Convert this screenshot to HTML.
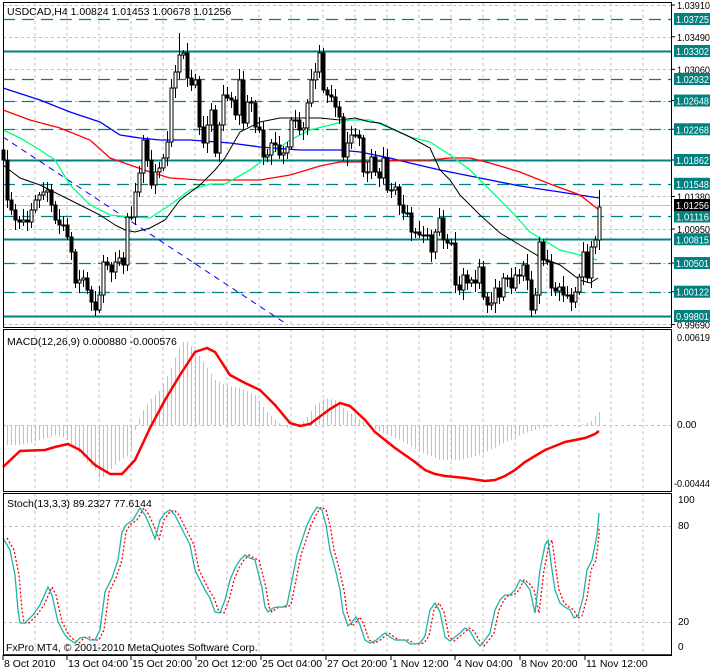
<!DOCTYPE html>
<html><head><meta charset="utf-8">
<style>
html,body{margin:0;padding:0;background:#fff;width:710px;height:671px;overflow:hidden}
svg{display:block}
text{font-family:"Liberation Sans",sans-serif;font-size:10.5px;fill:#000}
text.ax{font-size:10px}
</style></head><body>
<svg id="s" width="710" height="671" xmlns="http://www.w3.org/2000/svg"></svg>
<script>
var S=document.getElementById('s'),h='';
function Y(p){return 51+(1.03302-p)/0.0001321;}
function interp(pts,x){for(var i=0;i<pts.length-1;i++){if(x>=pts[i][0]&&x<=pts[i+1][0]){var t=(x-pts[i][0])/(pts[i+1][0]-pts[i][0]);return pts[i][1]+t*(pts[i+1][1]-pts[i][1]);}}return x<pts[0][0]?pts[0][1]:pts[pts.length-1][1];}
function pl(pts,c,w,d){return '<polyline fill="none" stroke="'+c+'" stroke-width="'+w+'"'+(d?' stroke-dasharray="'+d+'"':'')+' points="'+pts.map(function(p){return p[0]+','+p[1]}).join(' ')+'"/>';}
function at(x,y,s,st){return '<text class="ax" x="'+x+'" y="'+y+'" textLength="33" lengthAdjust="spacingAndGlyphs"'+(st?' style="'+st+'"':'')+'>'+s+'</text>';}
for(var x=35;x<672;x+=32){h+='<line x1="'+x+'" y1="3" x2="'+x+'" y2="327" stroke="#c0c0c0" stroke-dasharray="3,3"/>';h+='<line x1="'+x+'" y1="329" x2="'+x+'" y2="491" stroke="#c0c0c0" stroke-dasharray="3,3"/>';h+='<line x1="'+x+'" y1="493" x2="'+x+'" y2="655" stroke="#c0c0c0" stroke-dasharray="3,3"/>';}
var gridP=[1.03910,1.03490,1.03060,1.02648,1.02268,1.01862,1.01380,1.00950,1.00501,1.00122,0.99690];
gridP.forEach(function(p){var y=Math.round(Y(p))+.5;h+='<line x1="3" y1="'+y+'" x2="672" y2="'+y+'" stroke="#c0c0c0" stroke-dasharray="3,3"/>';});
var lv=[[1.03725,0],[1.03302,1],[1.02932,0],[1.02648,0],[1.02268,0],[1.01862,1],[1.01548,0],[1.01116,0],[1.00815,1],[1.00501,0],[1.00122,0],[0.99801,1]];
lv.forEach(function(l){var y=Math.round(Y(l[0]))+.5;h+='<line x1="3" y1="'+y+'" x2="672" y2="'+y+'" stroke="#008080" stroke-width="'+(l[1]?2:1.3)+'"'+(l[1]?'':' stroke-dasharray="12,7"')+'/>';});
h+='<line x1="3" y1="205.5" x2="672" y2="205.5" stroke="#c0c0c0"/>';
h+='<line x1="3" y1="137" x2="285" y2="323" stroke="#0000ff" stroke-dasharray="6,5"/>';
var blue=[[3,88],[40,100],[70,112],[100,122],[120,135],[140,138],[160,140],[190,140],[230,143],[260,147],[300,150],[340,150],[360,152],[390,158],[410,163],[440,170],[480,178],[520,186],[560,192],[599,198]];
var red=[[3,110],[30,120],[60,128],[90,140],[110,158],[130,165],[150,172],[170,178],[200,180],[230,180],[260,180],[290,175],[320,166],[340,162],[370,162],[400,160],[430,160],[450,158],[470,158],[490,163],[520,172],[550,184],[580,195],[599,210]];
var green=[[3,130],[20,138],[40,150],[55,160],[70,185],[90,205],[110,215],[130,217],[150,218],[170,205],[190,190],[210,184],[225,184],[250,170],[270,155],[290,140],[310,130],[330,125],[350,120],[370,120],[390,128],[410,137],[430,142],[450,155],[470,170],[490,190],[510,210],[530,232],[560,250],[580,255],[597,260]];
var blk=[[3,165],[20,178],[40,185],[60,195],[80,205],[100,215],[115,225],[125,230],[135,232],[150,228],[165,220],[180,200],[200,185],[215,170],[225,158],[240,132],[260,122],[280,118],[300,118],[320,118],[340,120],[355,118],[370,122],[380,123],[395,130],[410,137],[430,148],[440,170],[450,180],[460,195],[480,215],[500,233],[520,245],[540,257],[560,265],[580,280],[590,283],[598,278]];
h+=pl(blue,'#0000ff',1.3)+pl(red,'#ff0000',1.3)+pl(green,'#00ff7f',1.3)+pl(blk,'#000',1);
var cp=[[3,160],[7,200],[11,210],[15,220],[19,222],[23,220],[27,222],[31,210],[35,200],[39,195],[43,192],[47,190],[51,205],[55,220],[59,225],[63,225],[67,237],[71,252],[75,283],[79,280],[83,278],[87,290],[91,302],[95,310],[99,295],[103,262],[107,265],[111,272],[115,262],[119,258],[123,265],[127,217],[131,217],[135,192],[139,173],[143,140],[147,160],[151,185],[155,172],[159,168],[163,158],[167,142],[171,88],[175,72],[179,55],[183,53],[187,78],[191,85],[195,80],[199,127],[203,143],[207,125],[211,110],[215,153],[219,125],[223,95],[227,98],[231,100],[235,115],[239,80],[243,123],[247,102],[251,103],[255,127],[259,130],[263,157],[267,155],[271,143],[275,145],[279,155],[283,153],[287,147],[291,120],[295,120],[299,130],[303,128],[307,103],[311,80],[315,72],[319,53],[323,90],[327,95],[331,97],[335,107],[339,117],[343,157],[347,143],[351,135],[355,135],[359,138],[363,172],[367,172],[371,157],[375,172],[379,178],[383,158],[387,190],[391,190],[395,187],[399,205],[403,213],[407,213],[411,232],[415,232],[419,235],[423,235],[427,235],[431,252],[435,232],[439,218],[443,240],[447,243],[451,243],[455,285],[459,290],[463,275],[467,283],[471,280],[475,283],[479,267],[483,297],[487,305],[491,303],[495,288],[499,297],[503,278],[507,278],[511,288],[515,275],[519,276],[523,265],[527,280],[531,310],[535,295],[539,242],[543,260],[547,262],[551,288],[555,291],[559,287],[563,295],[567,295],[571,302],[575,292],[579,277],[583,252],[587,278],[591,247],[595,240],[599,207]];
var prev=150;
for(var i=0;i<cp.length;i++){var x=cp[i][0],c=cp[i][1],o=(i==cp.length-1)?240:prev;var t=Math.min(o,c),b=Math.max(o,c);var hi=t-3-((i*7)%9),lo=b+3+((i*5)%8);if(i==cp.length-1){hi=190;lo=250;}if(x==179)hi=33;if(x==319)hi=45;
h+='<line x1="'+(x+.5)+'" y1="'+hi+'" x2="'+(x+.5)+'" y2="'+lo+'" stroke="#000"/>';
if(b-t<1)b=t+1;
h+='<rect x="'+(x-1)+'" y="'+t+'" width="3" height="'+(b-t)+'" fill="'+(c<o?'#fff':'#000')+'" stroke="#000" stroke-width="1"/>';prev=c;}
var hist=[[3,445],[20,445],[40,440],[55,435],[65,438],[75,448],[85,460],[95,470],[100,480],[110,470],[120,460],[130,455],[135,430],[140,415],[150,400],[160,390],[170,370],[180,345],[185,340],[195,350],[205,365],[215,380],[225,385],[240,388],[255,395],[265,410],[275,420],[285,428],[295,426],[305,420],[315,405],[325,398],[335,400],[345,410],[360,420],[380,432],[400,440],[420,452],[440,460],[460,460],[480,455],[500,445],[520,435],[540,428],[560,425],[580,425],[590,422],[599,412]];
h+='<line x1="3" y1="425.5" x2="672" y2="425.5" stroke="#c0c0c0" stroke-dasharray="3,3"/>';
for(var x=3;x<=599;x+=4){var v=interp(hist,x);h+='<line x1="'+(x+.5)+'" y1="425" x2="'+(x+.5)+'" y2="'+v+'" stroke="#c0c0c0"/>';}
var macd=[[3,467],[20,451],[45,450],[55,447],[68,444],[80,450],[95,465],[110,474],[122,474],[135,460],[150,428],[165,400],[180,375],[195,352],[207,348],[215,352],[230,375],[245,383],[260,390],[275,405],[290,423],[300,426],[310,424],[330,409],[340,403],[350,406],[365,420],[375,432],[385,440],[395,448],[405,455],[415,462],[425,470],[435,474],[445,476],[465,478],[485,481],[495,480],[505,476],[515,470],[525,462],[535,456],[545,450],[555,446],[565,442],[575,440],[585,438],[595,434],[599,431]];
h+=pl(macd,'#ff0000',2.5);
h+='<line x1="3" y1="526.5" x2="672" y2="526.5" stroke="#c0c0c0" stroke-dasharray="3,3"/><line x1="3" y1="622.5" x2="672" y2="622.5" stroke="#c0c0c0" stroke-dasharray="3,3"/>';
var st=[[3,538],[10,550],[15,575],[18,610],[20,623],[25,623],[33,615],[40,605],[48,587],[52,595],[58,622],[65,635],[70,640],[75,643],[80,638],[85,637],[90,640],[95,640],[100,630],[105,592],[112,578],[118,560],[122,532],[126,525],[133,520],[140,508],[145,515],[150,526],[155,539],[160,520],[165,513],[170,510],[175,515],[180,525],[190,545],[195,570],[200,580],[205,590],[210,598],[215,612],[220,613],[225,600],[230,580],[235,568],[240,560],[245,555],[250,558],[255,560],[258,572],[262,588],[265,607],[268,612],[273,608],[278,607],[283,607],[287,605],[292,580],[297,555],[302,540],[307,525],[312,515],[317,507],[322,510],[326,525],[330,550],[335,568],[340,590],[343,612],[348,626],[352,622],[356,617],[360,625],[365,640],[370,643],[375,641],[380,637],[385,633],[390,637],[395,640],[400,640],[405,640],[410,644],[415,644],[420,643],[425,636],[430,610],[435,603],[440,612],[445,637],[450,641],[455,637],[460,633],[465,628],[470,631],[475,640],[480,646],[485,640],[490,633],[495,610],[500,600],[505,595],[510,595],[515,590],[520,580],[525,583],[530,590],[535,613],[540,570],[545,545],[548,540],[552,570],[555,590],[560,603],[565,607],[570,610],[574,618],[578,616],[583,598],[587,570],[592,560],[597,535],[599,513]];
var sig=st.map(function(p){return [Math.min(p[0]+4,599),p[1]]});sig[sig.length-1]=[599,527];
h+=pl(sig,'#ff0000',1.3,'2,2')+pl(st,'#20b2aa',1.3);
h+='<rect x="3.5" y="2.5" width="668" height="325" fill="none" stroke="#000"/>';
h+='<rect x="3.5" y="329.5" width="668" height="162" fill="none" stroke="#000"/>';
h+='<rect x="3.5" y="493.5" width="668" height="162" fill="none" stroke="#000" stroke-width="1"/>';
h+='<line x1="3" y1="655" x2="672" y2="655" stroke="#000" stroke-width="1.5"/>';
h+='<text x="7" y="15">USDCAD,H4  1.00824 1.01453 1.00678 1.01256</text>';
h+='<text x="7" y="345">MACD(12,26,9) 0.000880 -0.000576</text>';
h+='<text x="7" y="507">Stoch(13,3,3) 89.2327 77.6144</text>';
h+='<text x="6" y="651">FxPro MT4, © 2001-2010 MetaQuotes Software Corp.</text>';
gridP.forEach(function(p){var y=Y(p);h+='<line x1="672" y1="'+y+'" x2="675" y2="'+y+'" stroke="#000"/>'+at(677,y+4,p.toFixed(5));});
lv.forEach(function(l){var y=Y(l[0]);h+='<rect x="674" y="'+(y-6)+'" width="36" height="12" fill="#008080"/>'+at(676,y+4,l[0].toFixed(5),'fill:#fff');});
h+='<rect x="674" y="199" width="36" height="12" fill="#000"/>'+at(676,209,'1.01256','fill:#fff');
h+=at(677,341,'0.00619')+'<text class="ax" x="677" y="428">0.00</text><text class="ax" x="674" y="487" textLength="36" lengthAdjust="spacingAndGlyphs">-0.00444</text>';
h+='<text class="ax" x="678" y="503">100</text><text class="ax" x="678" y="529">80</text><text class="ax" x="678" y="625">20</text><text class="ax" x="678" y="650">0</text>';
var d=[[4,'8 Oct 2010'],[68,'13 Oct 04:00'],[132,'15 Oct 20:00'],[197,'20 Oct 12:00'],[262,'25 Oct 04:00'],[327,'27 Oct 20:00'],[392,'1 Nov 12:00'],[456,'4 Nov 04:00'],[521,'8 Nov 20:00'],[586,'11 Nov 12:00']];
d.forEach(function(a){h+='<line x1="'+(a[0]-1)+'" y1="655" x2="'+(a[0]-1)+'" y2="660" stroke="#000"/><text x="'+a[0]+'" y="667">'+a[1]+'</text>';});
S.innerHTML=h;
</script>
</body></html>
